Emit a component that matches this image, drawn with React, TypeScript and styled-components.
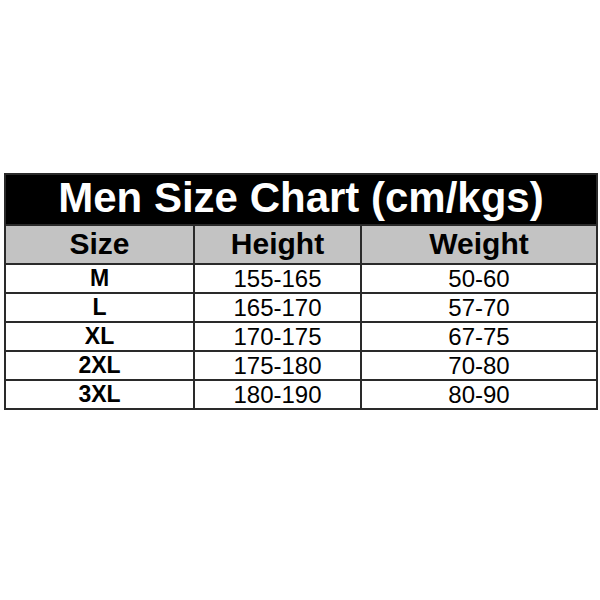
import styled, { createGlobalStyle } from 'styled-components'

const GlobalStyle = createGlobalStyle`
  html, body {
    margin: 0;
    padding: 0;
    background: #ffffff;
  }
  body {
    font-family: 'Liberation Sans', Arial, sans-serif;
  }
`

const Page = styled.div`
  width: 600px;
  height: 600px;
  padding: 173px 4px 0 4px;
  box-sizing: border-box;
`

const Chart = styled.table`
  width: 592px;
  border-collapse: collapse;
  table-layout: fixed;
  border: 2px solid #2a2a2a;
`

const TitleCell = styled.th`
  background: #000;
  color: #fff;
  height: 46px;
  padding: 0 0 3px 0;
  font-size: 42px;
  font-weight: 700;
  text-align: center;
  line-height: 1;
`

const HeadCell = styled.th`
  background: #c3c3c3;
  color: #000;
  height: 35px;
  padding: 0 0 2px 0;
  font-size: 30px;
  font-weight: 700;
  text-align: center;
  border: 2px solid #2a2a2a;
  line-height: 1;
`

const Cell = styled.td<{ $bold?: boolean }>`
  height: 27px;
  padding: 0;
  text-align: center;
  color: #000;
  font-size: ${(p) => (p.$bold ? '23px' : '24px')};
  font-weight: ${(p) => (p.$bold ? 700 : 400)};
  border: 2px solid #2a2a2a;
  line-height: 1;
`

const rows = [
  { size: 'M', height: '155-165', weight: '50-60' },
  { size: 'L', height: '165-170', weight: '57-70' },
  { size: 'XL', height: '170-175', weight: '67-75' },
  { size: '2XL', height: '175-180', weight: '70-80' },
  { size: '3XL', height: '180-190', weight: '80-90' },
]

const App = () => {
  return (
    <>
      <GlobalStyle />
      <Page>
        <Chart>
          <colgroup>
            <col style={{ width: 189 }} />
            <col style={{ width: 167 }} />
            <col style={{ width: 236 }} />
          </colgroup>
          <thead>
            <tr>
              <TitleCell colSpan={3}>Men Size Chart (cm/kgs)</TitleCell>
            </tr>
            <tr>
              <HeadCell>Size</HeadCell>
              <HeadCell>Height</HeadCell>
              <HeadCell>Weight</HeadCell>
            </tr>
          </thead>
          <tbody>
            {rows.map((r) => (
              <tr key={r.size}>
                <Cell $bold>{r.size}</Cell>
                <Cell>{r.height}</Cell>
                <Cell>{r.weight}</Cell>
              </tr>
            ))}
          </tbody>
        </Chart>
      </Page>
    </>
  )
}

export default App
